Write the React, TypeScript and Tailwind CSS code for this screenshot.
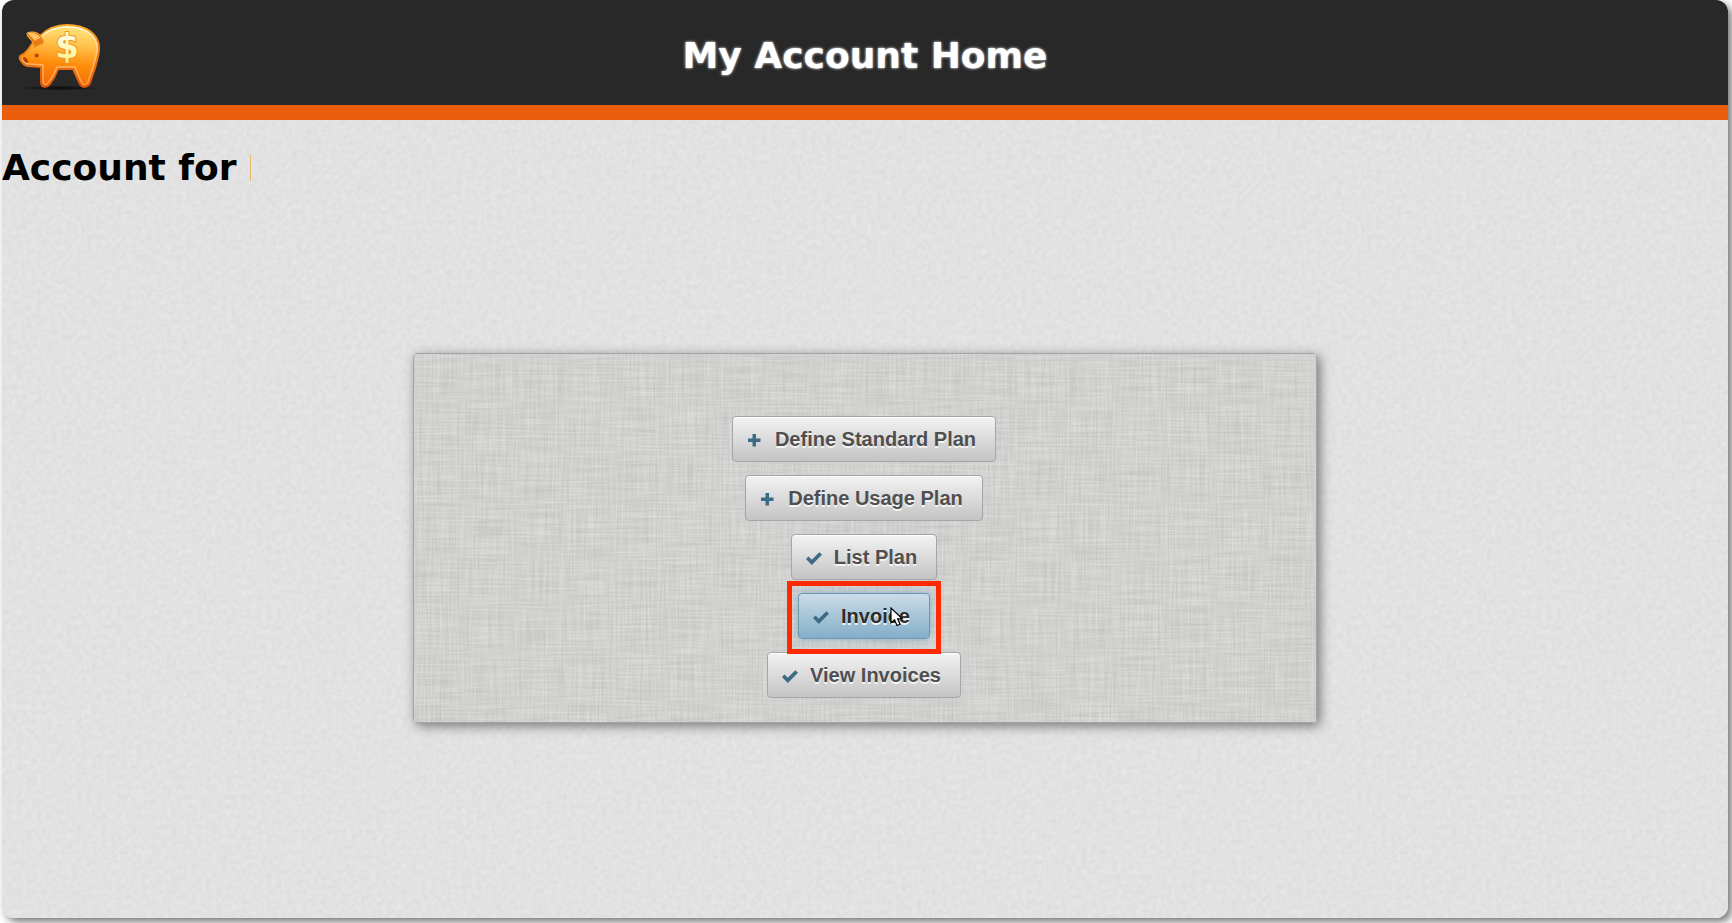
type Plan = { label: string; icon: "plus" | "check"; active?: boolean };

const actions: Plan[] = [
  { label: "Define Standard Plan", icon: "plus" },
  { label: "Define Usage Plan", icon: "plus" },
  { label: "List Plan", icon: "check" },
  { label: "Invoice", icon: "check", active: true },
  { label: "View Invoices", icon: "check" },
];

function PiggyLogo() {
  return (
    <svg width="92" height="76" viewBox="0 0 92 76" aria-hidden="true">
      <defs>
        <linearGradient id="pig" x1="0.6" y1="0" x2="0.45" y2="1">
          <stop offset="0" stopColor="#ffe680" />
          <stop offset="0.3" stopColor="#ffc24c" />
          <stop offset="0.62" stopColor="#ff8c0a" />
          <stop offset="1" stopColor="#f06a06" />
        </linearGradient>
        <linearGradient id="pigLine" x1="0" y1="0" x2="0" y2="1">
          <stop offset="0" stopColor="#f9a52a" />
          <stop offset="1" stopColor="#dd5208" />
        </linearGradient>
        <linearGradient id="pigShine" x1="0" y1="0" x2="0" y2="1">
          <stop offset="0" stopColor="#fffbe0" />
          <stop offset="0.5" stopColor="#ffc070" />
          <stop offset="1" stopColor="#ff9c50" />
        </linearGradient>
        <linearGradient id="dollar" x1="0" y1="0" x2="0" y2="1">
          <stop offset="0" stopColor="#ffffff" />
          <stop offset="1" stopColor="#fff080" />
        </linearGradient>
        <radialGradient id="ground">
          <stop offset="0" stopColor="#0c0c0c" />
          <stop offset="0.6" stopColor="#181818" />
          <stop offset="1" stopColor="#282828" />
        </radialGradient>
      </defs>
      <ellipse cx="46" cy="70" rx="38" ry="2.5" fill="url(#ground)" />
      <path
        d="M26 18 C33 11 42 7 53 7 C73 7 85 17 85 30 C85 37 83 43 81 50 L76 65 C74 70 68 70 66 66 C63 60 61 55 59 51 L44 51 C42 57 39 62 36 66 C33 70 27 70 27 64 L27 49 L14 48 C10 48 9 45 7 43 C5 40 5 38 8 37 C12 35 15 31 18 26 Z"
        fill="url(#pig)"
        stroke="url(#pigLine)"
        strokeWidth="2"
        strokeLinejoin="round"
      />
      <path
        d="M27 19 C34 12 42 9 53 9 C72 9 83 18 83 30 C83 36 81 42 79 49 L74 64 C73 67 69 67 68 65 C65 59 63 54 61 49 L43 49 C41 55 38 60 34 65 C31 68 29 66 29 63 L29 47 L15 46 C12 46 10 44 8 41"
        fill="none"
        stroke="url(#pigShine)"
        strokeWidth="1.5"
      />
      <path
        d="M13 15 C18 13 24 14 27 18 C28 21 30 22 30 24 C29 28 23 26 20 31 C20 26 18 23 16 21 C14 19 13 18 13 15 Z"
        fill="#ea7c14"
        stroke="#fba838"
        strokeWidth="1"
      />
      <path d="M14 15 C19 14 23 15 27 20 C24 20 22 22 21 23 C19 19 16 19 14 15 Z" fill="#ffc468" />
      <circle cx="22.7" cy="37.5" r="2.1" fill="#b84a06" />
      <ellipse cx="11.5" cy="42" rx="1.8" ry="3.3" transform="rotate(-38 11.5 42)" fill="#b04408" />
      <text
        x="53"
        y="40"
        textAnchor="middle"
        fontFamily="DejaVu Sans, sans-serif"
        fontWeight="bold"
        fontSize="34"
        fill="url(#dollar)"
        stroke="#f0932a"
        strokeWidth="2"
        paintOrder="stroke"
      >
        $
      </text>
    </svg>
  );
}

function PaperTexture() {
  return (
    <svg className="absolute inset-0 h-full w-full" aria-hidden="true">
      <filter id="paper" x="0" y="0" width="100%" height="100%" colorInterpolationFilters="sRGB">
        <feTurbulence type="fractalNoise" baseFrequency="0.2" numOctaves="3" seed="4" />
        <feColorMatrix values="0.06 0 0 0 0.855  0.06 0 0 0 0.855  0.06 0 0 0 0.855  0 0 0 0 1" />
      </filter>
      <rect width="100%" height="100%" filter="url(#paper)" />
    </svg>
  );
}

function LinenTexture() {
  return (
    <svg className="absolute inset-0 h-full w-full rounded-[3px]" aria-hidden="true">
      <filter id="linen" x="0" y="0" width="100%" height="100%" colorInterpolationFilters="sRGB">
        <feTurbulence type="fractalNoise" baseFrequency="0.02 0.5" numOctaves="2" seed="3" result="weft" />
        <feTurbulence type="fractalNoise" baseFrequency="0.5 0.02" numOctaves="2" seed="9" result="warp" />
        <feColorMatrix in="weft" values="1 0 0 0 0  1 0 0 0 0  1 0 0 0 0  0 0 0 0 1" result="a" />
        <feColorMatrix in="warp" values="1 0 0 0 0  1 0 0 0 0  1 0 0 0 0  0 0 0 0 1" result="b" />
        <feComposite in="a" in2="b" operator="arithmetic" k2="0.5" k3="0.5" />
        <feColorMatrix values="0.2 0 0 0 0.718  0.2 0 0 0 0.718  0.2 0 0 0 0.711  0 0 0 0 1" />
      </filter>
      <rect width="100%" height="100%" filter="url(#linen)" />
    </svg>
  );
}

function ActionIcon({ kind }: { kind: Plan["icon"] }) {
  return (
    <svg width="16" height="16" viewBox="0 0 16 16" aria-hidden="true" className="mt-0.5">
      {kind === "plus" ? (
        <path d="M5.5 2h3.5v4.5h4.5v3.5H9v4.5H5.5v-4.5H1V6.500h4.500z" fill="#3d6b84" />
      ) : (
        <path d="M0 9 L2.5 6.5 L5.8 9.8 L13.3 2.3 L16 4.8 L5.8 15 Z" fill="#3d6b84" />
      )}
    </svg>
  );
}

const buttonBase =
  "flex h-[46px] items-center gap-3 rounded-[4px] border pl-[14px] pr-[19px] text-xl font-bold [text-shadow:0_2px_0_#f4f4f4]";
const idle =
  "border-[#a6a6a6] bg-linear-to-b from-[#f3f3f3] to-[#c4c4c4] text-[#4f4f4f] shadow-[inset_0_1px_0_#fff]";
const hovered =
  "border-[#6d98b1] bg-linear-to-b from-[#cbdce8] to-[#84aec8] text-[#2c2c2c] shadow-[0_0_8px_#84aec8]";

function ActionButton({ plan }: { plan: Plan }) {
  return (
    <button type="button" className={plan.active ? `${buttonBase} ${hovered}` : `${buttonBase} ${idle}`}>
      <ActionIcon kind={plan.icon} />
      {plan.label}
    </button>
  );
}

function Pointer() {
  return (
    <svg width="13" height="20" viewBox="0 0 13 20" className="absolute left-[92px] top-[14px]" aria-hidden="true">
      <path
        d="M1 1 V16 L4.5 12.8 L7 18.5 L10 17.2 L7.6 11.8 L12 11.5 Z"
        fill="#fff"
        stroke="#000"
        strokeWidth="1.2"
      />
    </svg>
  );
}

export default function App() {
  return (
    <div className="min-h-screen bg-white pr-1 pb-[5px] pl-0.5 font-['DejaVu_Sans',sans-serif]">
      <div className="relative flex min-h-[calc(100vh-5px)] flex-col overflow-hidden rounded-xl shadow-[4px_4px_8px_#777]">
        <PaperTexture />
        <header className="relative grid grid-cols-[1fr_auto_1fr] items-center border-b-[15px] border-[#eb5e0d] bg-[#282828] px-3 pt-[18px] pb-[11px]">
          <PiggyLogo />
          <h1 className="text-4xl font-bold text-white [text-shadow:0_0_3px_#fff]">My Account Home</h1>
        </header>
        <main className="relative flex flex-1 flex-col">
          <h2 className="flex items-center gap-3.5 pt-7 text-4xl font-bold text-black">
            Account for
            <span className="h-[26px] w-px bg-[#e7b965]" />
          </h2>
          <section className="relative mx-auto mt-[165px] w-[52.4%] rounded-[4px] border border-[#a3a4a6] shadow-[3px_3px_12px_#777]">
            <LinenTexture />
            <div className="relative flex flex-col items-center gap-[13px] pt-[62px] pr-0.5 pb-6 font-['Liberation_Sans',Arial,sans-serif]">
              {actions.map((plan) =>
                plan.active ? (
                  <div key={plan.label} className="relative">
                    <ActionButton plan={plan} />
                    <span className="pointer-events-none absolute -top-3 -right-[11px] -bottom-[15px] -left-[11px] z-10 border-[5px] border-[#ff2a00]" />
                    <Pointer />
                  </div>
                ) : (
                  <ActionButton key={plan.label} plan={plan} />
                ),
              )}
            </div>
          </section>
        </main>
      </div>
    </div>
  );
}
